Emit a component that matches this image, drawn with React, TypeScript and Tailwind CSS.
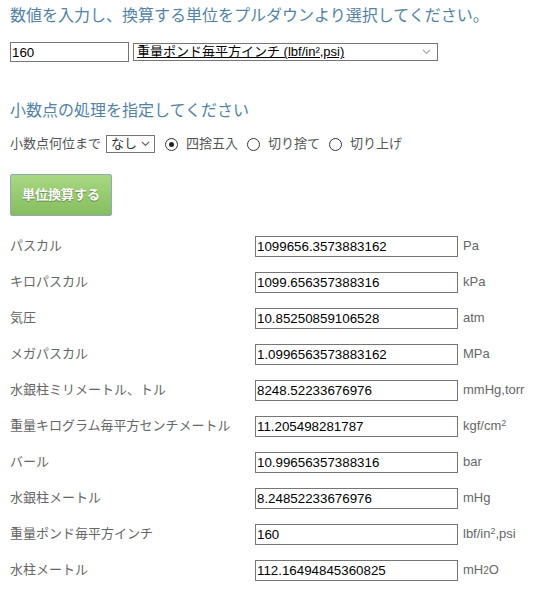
import React, { useState } from 'react';

type Row = { label: string; value: string; unit: React.ReactNode };

const rows: Row[] = [
  { label: 'パスカル', value: '1099656.3573883162', unit: 'Pa' },
  { label: 'キロパスカル', value: '1099.656357388316', unit: 'kPa' },
  { label: '気圧', value: '10.85250859106528', unit: 'atm' },
  { label: 'メガパスカル', value: '1.0996563573883162', unit: 'MPa' },
  { label: '水銀柱ミリメートル、トル', value: '8248.52233676976', unit: 'mmHg,torr' },
  {
    label: '重量キログラム毎平方センチメートル',
    value: '11.205498281787',
    unit: (
      <>
        kgf/cm<sup className="text-[9px]">2</sup>
      </>
    ),
  },
  { label: 'バール', value: '10.99656357388316', unit: 'bar' },
  { label: '水銀柱メートル', value: '8.24852233676976', unit: 'mHg' },
  {
    label: '重量ポンド毎平方インチ',
    value: '160',
    unit: (
      <>
        lbf/in<sup className="text-[9px]">2</sup>,psi
      </>
    ),
  },
  {
    label: '水柱メートル',
    value: '112.16494845360825',
    unit: (
      <>
        mH<span className="text-[10px]">2</span>O
      </>
    ),
  },
];

const Chevron = ({ color }: { color: string }) => (
  <svg width="9" height="6" viewBox="0 0 9 6" fill="none">
    <polyline points="1,1 4.5,4.5 8,1" stroke={color} strokeWidth="1.2" />
  </svg>
);

const Radio = ({ checked }: { checked: boolean }) => (
  <span className="w-[13px] h-[13px] rounded-full border border-[#333] bg-white flex items-center justify-center">
    {checked && <span className="w-[5px] h-[5px] rounded-full bg-[#222]" />}
  </span>
);

const App: React.FC = () => {
  const [mode, setMode] = useState(0);
  const modes = ['四捨五入', '切り捨て', '切り上げ'];

  return (
    <div className="w-[540px] h-[594px] bg-white px-[10px] text-[#666] font-['Liberation_Sans','Noto_Sans_CJK_JP',sans-serif] overflow-hidden">
      <h1 className="pt-[6px] text-[16px] leading-[20px] text-[#5283a6] whitespace-nowrap">
        数値を入力し、換算する単位をプルダウンより選択してください。
      </h1>

      <div className="mt-[16px] flex items-center">
        <input
          defaultValue="160"
          className="w-[119px] h-[20px] border border-[#767676] px-[1px] text-[13.33px] text-black outline-none"
        />
        <div className="ml-[4px] w-[305px] h-[18px] border border-[#767676] flex items-center justify-between pl-[3px] pr-[6px] text-[13px] text-black">
          <span className="underline leading-[16px]">重量ポンド毎平方インチ (lbf/in²,psi)</span>
          <Chevron color="#aaa" />
        </div>
      </div>

      <h2 className="mt-[39px] text-[16px] leading-[20px] text-[#5283a6]">小数点の処理を指定してください</h2>

      <div className="mt-[13px] flex items-center h-[20px] text-[13px] text-[#555]">
        <span>小数点何位まで</span>
        <div className="ml-[5px] w-[49px] h-[18px] border border-[#767676] flex items-center justify-between pl-[4px] pr-[4px] text-[#333]">
          <span>なし</span>
          <Chevron color="#666" />
        </div>
        {modes.map((m, i) => (
          <label key={m} className="flex items-center cursor-pointer" onClick={() => setMode(i)}>
            <span className={i === 0 ? 'ml-[10px]' : 'ml-[9px]'}>
              <Radio checked={mode === i} />
            </span>
            <span className="ml-[8px]">{m}</span>
          </label>
        ))}
      </div>

      <button className="mt-[20px] w-[102px] h-[42px] rounded-[2px] border border-[#8eaab8] bg-gradient-to-b from-[#a8d882] to-[#86bd5f] text-white font-bold text-[13px] [text-shadow:0_1px_1px_rgba(0,0,0,0.35)]">
        単位換算する
      </button>

      <div className="mt-[12px]">
        {rows.map(r => (
          <div key={r.label} className="flex items-center h-[36px] text-[13px]">
            <span className="w-[245px] text-[#666] whitespace-nowrap">{r.label}</span>
            <input
              readOnly
              value={r.value}
              className="w-[203px] h-[21px] border border-[#767676] px-[1px] text-[13.33px] text-black outline-none"
            />
            <span className="ml-[5px] text-[#666] whitespace-nowrap">{r.unit}</span>
          </div>
        ))}
      </div>
    </div>
  );
};

export default App;
